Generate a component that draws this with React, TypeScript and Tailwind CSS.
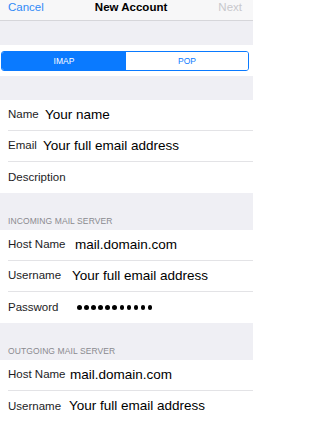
import React from "react";

type Field = { label: string; value?: string; labelW: string; secret?: boolean };

const font = { fontFamily: '"Liberation Sans", Arial, sans-serif' };

const Row = ({ field, last }: { field: Field; last?: boolean }) => (
  <div className="pl-[8px]">
    <div
      className={`flex items-center h-[31px] ${last ? "" : "border-b border-[#e3e3e6]"}`}
    >
      <span className={`${field.labelW} shrink-0 text-[11.5px] text-[#1c1c1e]`}>{field.label}</span>
      {field.secret ? (
        <span className="flex gap-[2.6px] pl-[4px]">
          {Array.from({ length: 11 }).map((_, i) => (
            <span key={i} className="block w-[4.5px] h-[4.5px] rounded-full bg-black" />
          ))}
        </span>
      ) : (
        <span className="text-[13.5px] text-black">{field.value}</span>
      )}
    </div>
  </div>
);

const SectionHeader = ({ title }: { title: string }) => (
  <div className="h-[37px] flex items-end pl-[8px] pb-[3px]">
    <span className="text-[8.5px] leading-[12px] text-[#8a8a8f] tracking-[0.1px]">{title}</span>
  </div>
);

export default function App() {
  const account: Field[] = [
    { label: "Name", value: "Your name", labelW: "w-[37px]" },
    { label: "Email", value: "Your full email address", labelW: "w-[35px]" },
    { label: "Description", labelW: "w-[60px]" },
  ];
  const incoming: Field[] = [
    { label: "Host Name", value: "mail.domain.com", labelW: "w-[67px]" },
    { label: "Username", value: "Your full email address", labelW: "w-[64px]" },
    { label: "Password", labelW: "w-[65px]", secret: true },
  ];
  const outgoing: Field[] = [
    { label: "Host Name", value: "mail.domain.com", labelW: "w-[62px]" },
    { label: "Username", value: "Your full email address", labelW: "w-[61px]" },
  ];

  return (
    <div className="w-[264px] h-[421px] overflow-hidden bg-white" style={font}>
      <div className="w-[253px] bg-[#efeff4]">
        {/* nav bar */}
        <div className="h-[21px] bg-[#f7f7f8] border-b border-[#d6d6da] flex justify-between px-[8px]">
          <span className="text-[11.5px] leading-[14px] text-[#2f8af7]">Cancel</span>
          <span className="text-[11.5px] leading-[14px] font-bold text-black">New Account</span>
          <span className="text-[11.5px] leading-[14px] text-[#c8c8cc] pr-[3px]">Next</span>
        </div>

        <div className="h-[24px]" />

        {/* segmented control */}
        <div className="bg-white h-[31px] pt-[6px] pl-[1px]">
          <div className="flex w-[248px] h-[20px] border border-[#0a7aff] rounded-[3px] overflow-hidden text-[8.5px]">
            <div className="w-[124px] bg-[#0a7aff] text-white flex items-center justify-center">IMAP</div>
            <div className="flex-1 bg-white text-[#0a7aff] flex items-center justify-center">POP</div>
          </div>
        </div>

        <div className="h-[24px]" />

        <div className="bg-white">
          {account.map((f, i) => (
            <Row key={f.label} field={f} last={i === account.length - 1} />
          ))}
        </div>

        <SectionHeader title="INCOMING MAIL SERVER" />
        <div className="bg-white">
          {incoming.map((f, i) => (
            <Row key={f.label} field={f} last={i === incoming.length - 1} />
          ))}
        </div>

        <SectionHeader title="OUTGOING MAIL SERVER" />
        <div className="bg-white">
          {outgoing.map((f, i) => (
            <Row key={f.label} field={f} last={i === outgoing.length - 1} />
          ))}
        </div>
      </div>
    </div>
  );
}
